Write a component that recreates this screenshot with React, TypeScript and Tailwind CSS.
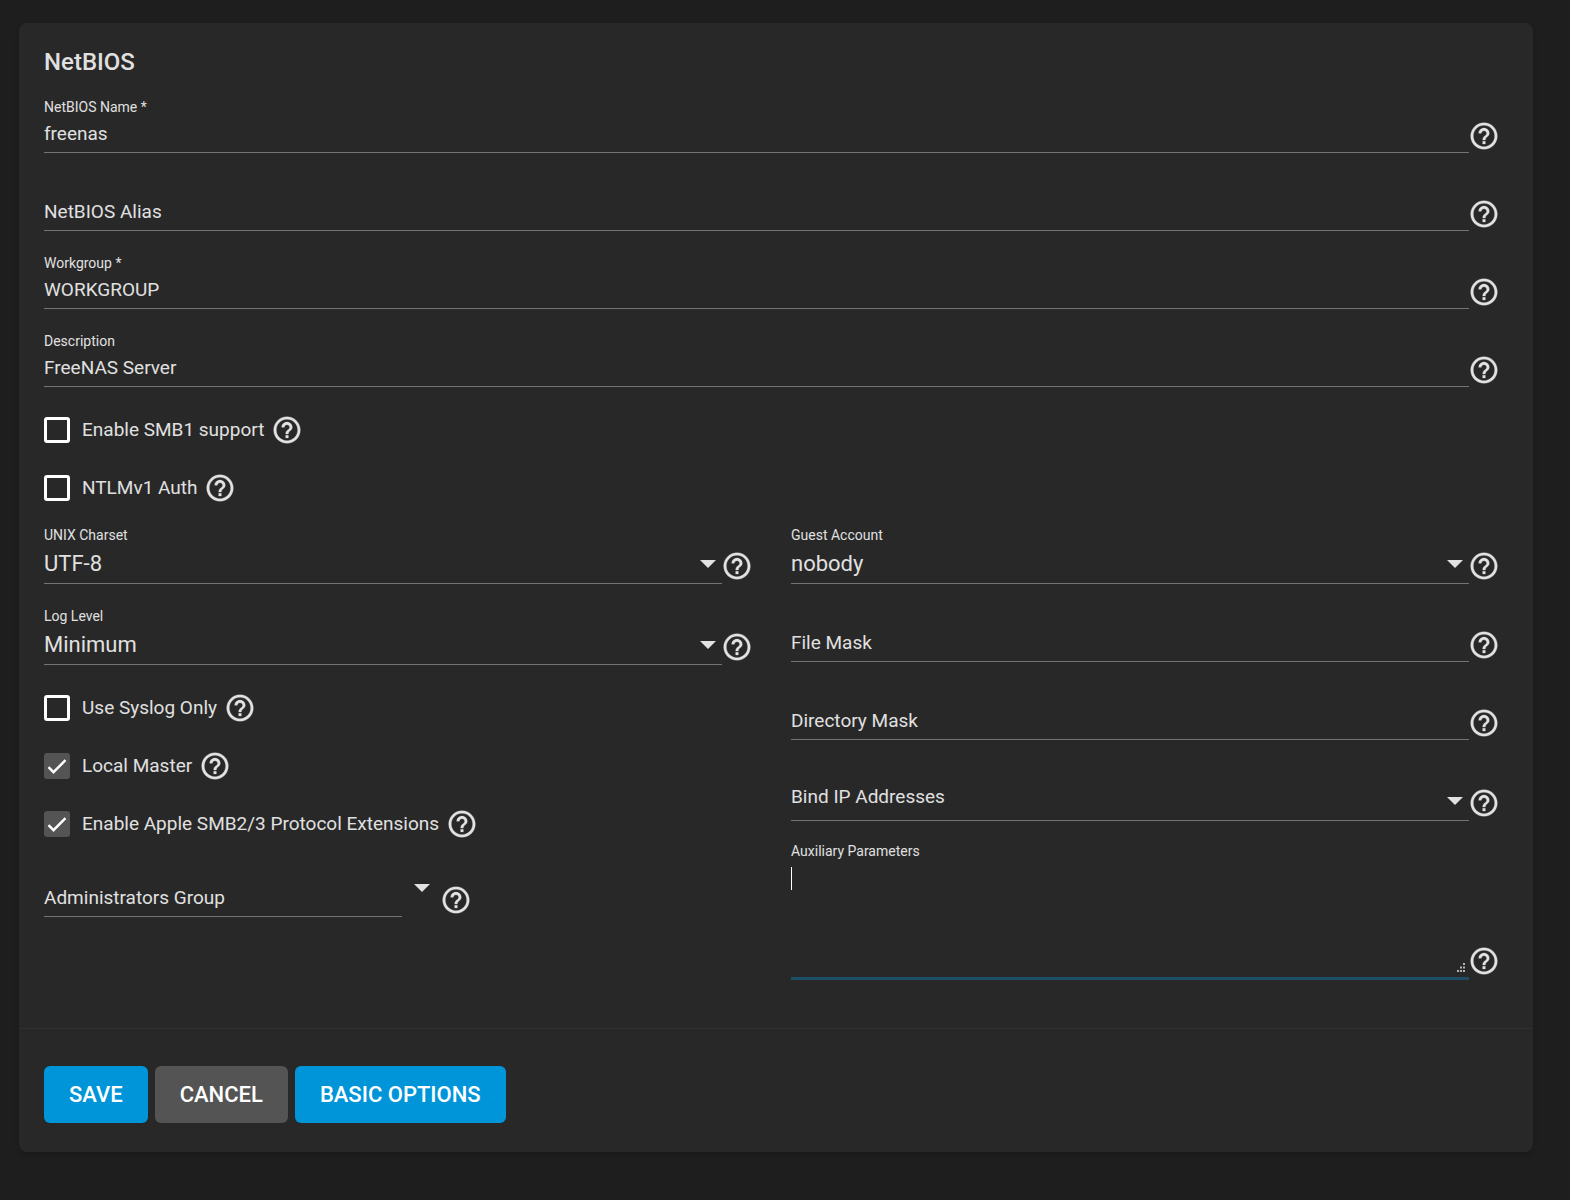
import { useId } from 'react';

interface FieldProps {
  label: string;
  value?: string;
  required?: boolean;
}

function Help({ topic }: { topic: string }) {
  return (
    <button type="button" aria-label={`Help: ${topic}`} className="-ml-px shrink-0 text-[#e2e2e2]">
      <svg
        className="block size-8"
        viewBox="0 0 24 24"
        fill="currentColor"
        stroke="currentColor"
        strokeWidth="0.2"
        aria-hidden="true"
      >
        <path d="M11 18h2v-2h-2v2zm1-16C6.48 2 2 6.48 2 12s4.48 10 10 10 10-4.48 10-10S17.52 2 12 2zm0 18c-4.41 0-8-3.59-8-8s3.59-8 8-8 8 3.59 8 8-3.59 8-8 8zm0-14c-2.21 0-4 1.79-4 4h2c0-1.1.9-2 2-2s2 .9 2 2c0 2-3 1.75-3 5h2c0-2.25 3-2.5 3-5 0-2.21-1.79-4-4-4z" />
      </svg>
    </button>
  );
}

function Arrow() {
  return (
    <svg className="block h-2 w-4" viewBox="0 0 16 8" fill="#e2e2e2" aria-hidden="true">
      <path d="M0 0h16L8 8z" />
    </svg>
  );
}

function TextField({ label, value, required }: FieldProps) {
  const id = useId();
  return (
    <div className="mb-[22px] flex items-end">
      <div className="relative flex min-w-0 flex-1 flex-col pt-5">
        <label
          htmlFor={id}
          className={
            value
              ? 'absolute inset-x-0 top-0 text-sm leading-5'
              : 'pointer-events-none absolute inset-x-0 bottom-[5px] text-[19px] leading-7'
          }
        >
          {label}
          {required && ' *'}
        </label>
        <input
          id={id}
          type="text"
          defaultValue={value}
          className="h-9 w-full border-b border-[#747474] bg-transparent pb-0.5 text-[19px] outline-none"
        />
      </div>
      <div className="flex pb-px">
        <Help topic={label} />
      </div>
    </div>
  );
}

function SelectField({ label, value }: FieldProps) {
  const id = useId();
  return (
    <div className="mb-[22px] flex items-end">
      <div className="relative flex min-w-0 flex-1 flex-col pt-5">
        <label
          htmlFor={id}
          className={
            value
              ? 'absolute inset-x-0 top-0 text-sm leading-5'
              : 'pointer-events-none absolute inset-x-0 bottom-[10px] text-[19px] leading-7'
          }
        >
          {label}
        </label>
        <select
          id={id}
          defaultValue={value}
          className="h-[39px] w-full appearance-none border-b border-[#747474] bg-transparent pb-0.5 text-[22px] outline-none"
        >
          <option>{value}</option>
        </select>
        <span className="pointer-events-none absolute right-1.5 bottom-4">
          <Arrow />
        </span>
      </div>
      <div className="flex pb-0.5">
        <Help topic={label} />
      </div>
    </div>
  );
}

function CheckField({ label, checked }: { label: string; checked?: boolean }) {
  return (
    <div className="mb-4 flex h-[42px] items-center gap-2">
      <label className="flex items-center gap-3 text-[19px] leading-7">
        <span className="relative block size-[26px] shrink-0">
          <input
            type="checkbox"
            defaultChecked={checked}
            className="peer block size-full appearance-none rounded-[3px] border-[3px] border-white checked:border-0 checked:bg-[#545454]"
          />
          <svg
            className="pointer-events-none absolute inset-0 hidden size-full peer-checked:block"
            viewBox="0 0 26 26"
            fill="none"
            stroke="#fff"
            strokeWidth="2.4"
            aria-hidden="true"
          >
            <path d="M4.5 14.2l5 5L21.5 7.2" />
          </svg>
        </span>
        {label}
      </label>
      <Help topic={label} />
    </div>
  );
}

function GroupField() {
  return (
    <div className="flex items-end">
      <div className="relative w-[358px] pt-5">
        <label
          htmlFor="admin-group"
          className="pointer-events-none absolute inset-x-0 bottom-[5px] text-[19px] leading-7"
        >
          Administrators Group
        </label>
        <input
          id="admin-group"
          type="text"
          className="block h-9 w-full border-b border-[#747474] bg-transparent pb-0.5 text-[19px] outline-none"
        />
      </div>
      <button type="button" aria-label="Show groups" className="mr-[11px] ml-3 pb-[25px]">
        <Arrow />
      </button>
      <div className="flex pb-px">
        <Help topic="Administrators Group" />
      </div>
    </div>
  );
}

function AuxField() {
  return (
    <div className="flex items-end">
      <div className="relative min-w-0 flex-1">
        <label htmlFor="aux" className="block text-sm leading-4">
          Auxiliary Parameters
        </label>
        <textarea
          id="aux"
          className="block h-[121px] w-full resize-none border-b-[3px] border-[#1d4f66] bg-transparent pt-2 text-[19px] caret-transparent outline-none"
        />
        {/* caret and resize grip */}
        <span className="pointer-events-none absolute top-6 left-0 h-[23px] w-px bg-white" />
        <svg
          className="pointer-events-none absolute right-[3px] bottom-[7px] size-[10px]"
          viewBox="0 0 10 10"
          fill="#b4b4b4"
          aria-hidden="true"
        >
          <path d="M7 0h2v2H7zM4 3.5h2v2H4zM7 3.5h2v2H7zM1 7h2v2H1zM4 7h2v2H4zM7 7h2v2H7z" />
        </svg>
      </div>
      <div className="flex pb-[3px]">
        <Help topic="Auxiliary Parameters" />
      </div>
    </div>
  );
}

export default function App() {
  return (
    <main className="min-h-screen bg-[#1e1e1e] pt-[23px] pr-[37px] pb-12 pl-[19px] font-[Roboto,sans-serif] text-[#e0e0e0]">
      <form className="rounded-lg bg-[#282828] shadow-md">
        <div className="pt-[23px] pr-[33px] pb-[48px] pl-[25px]">
          <h1 className="mb-[19px] text-2xl font-medium">NetBIOS</h1>

          <TextField label="NetBIOS Name" value="freenas" required />
          <TextField label="NetBIOS Alias" />
          <TextField label="Workgroup" value="WORKGROUP" required />
          <TextField label="Description" value="FreeNAS Server" />
          <CheckField label="Enable SMB1 support" />
          <CheckField label="NTLMv1 Auth" />

          <div className="grid grid-cols-2 gap-x-[38px]">
            <div>
              <SelectField label="UNIX Charset" value="UTF-8" />
              <SelectField label="Log Level" value="Minimum" />
              <CheckField label="Use Syslog Only" />
              <CheckField label="Local Master" checked />
              <CheckField label="Enable Apple SMB2/3 Protocol Extensions" checked />
              <GroupField />
            </div>
            <div>
              <SelectField label="Guest Account" value="nobody" />
              <TextField label="File Mask" />
              <TextField label="Directory Mask" />
              <SelectField label="Bind IP Addresses" />
              <AuxField />
            </div>
          </div>
        </div>

        <div className="flex gap-[7px] border-t border-[#303030] pt-[37px] pr-[33px] pb-[29px] pl-[25px] text-[22px] font-medium text-white">
          <button type="submit" className="h-[57px] rounded-md bg-[#0095d9] px-[25px]">
            SAVE
          </button>
          <button type="button" className="h-[57px] rounded-md bg-[#545454] px-[25px]">
            CANCEL
          </button>
          <button type="button" className="h-[57px] rounded-md bg-[#0095d9] px-[25px]">
            BASIC OPTIONS
          </button>
        </div>
      </form>
    </main>
  );
}
